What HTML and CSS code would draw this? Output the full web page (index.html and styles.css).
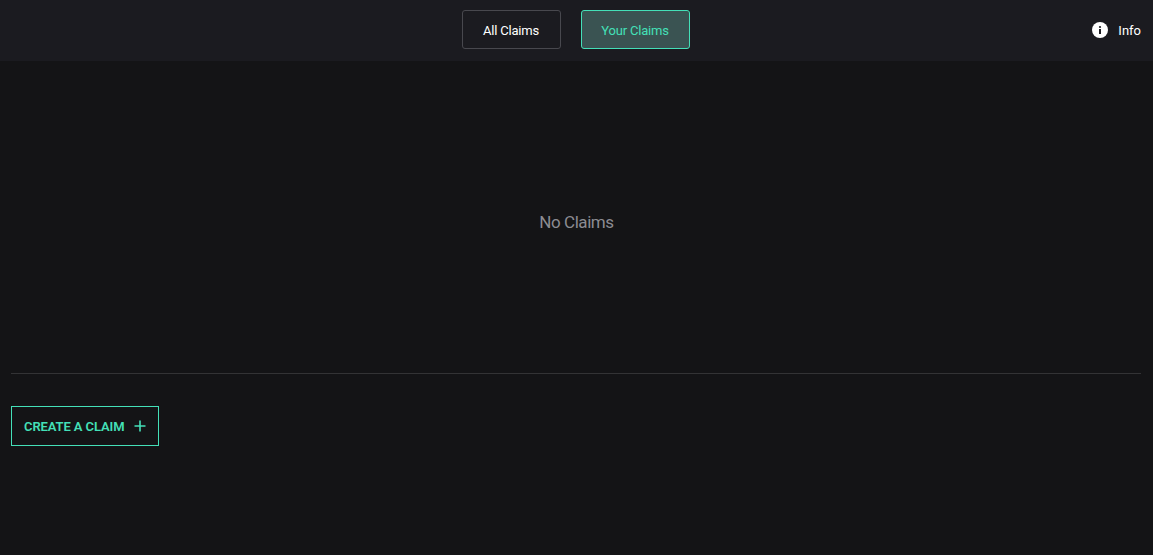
FILE: index.html
```html
<!DOCTYPE html>
<html lang="en">
<head>
<meta charset="utf-8">
<title>Claims</title>
<link rel="stylesheet" href="styles.css">
</head>
<body>
<header class="topbar">
  <nav class="tabs">
    <button class="tab">All Claims</button>
    <button class="tab tab-active">Your Claims</button>
  </nav>
  <div class="info">
    <svg class="info-icon" viewBox="0 0 16 16" width="16" height="16" aria-hidden="true">
      <circle cx="8" cy="8" r="8" fill="#fff"/>
      <rect x="7" y="7" width="2" height="5" fill="#1b1b20"/>
      <circle cx="8" cy="5" r="1.1" fill="#1b1b20"/>
    </svg>
    <span class="info-label">Info</span>
  </div>
</header>
<main class="content">
  <section class="empty">No Claims</section>
  <hr class="rule">
  <button class="create">CREATE A CLAIM
    <svg viewBox="0 0 12 12" width="12" height="12" aria-hidden="true"><path d="M6 0.5V11.5M0.5 6H11.5" stroke="#44e0b8" stroke-width="1.6" fill="none"/></svg>
  </button>
</main>
</body>
</html>
```
FILE: styles.css
```css
* { box-sizing: border-box; }
html, body { margin: 0; height: 100%; }
body {
  background: #141416;
  color: #fff;
  font-family: Roboto, "Liberation Sans", sans-serif;
  overflow: hidden;
}
.topbar {
  height: 61px;
  background: #1b1b20;
  display: flex;
  align-items: center;
  justify-content: center;
  position: relative;
}
.tabs { display: flex; gap: 20px; margin-bottom: 2px; margin-right: 2px; }
.tab {
  height: 39px;
  border: 1px solid #48484e;
  border-radius: 3px;
  background: transparent;
  color: #fff;
  font: 400 13px Roboto, sans-serif;
  letter-spacing: -0.2px;
  padding: 1px 0 0;
  width: 99px;
}
.tab-active {
  width: 109px;
  background: #3a5352;
  border-color: #44e0b8;
  color: #44e0b8;
}
.info {
  position: absolute;
  right: 12px;
  top: 21px;
  display: flex;
  align-items: center;
  gap: 10px;
  font-size: 13px;
}
.info-label { padding-top: 2px; }
.content { padding: 0 12px 0 11px; }
.empty {
  height: 312px;
  display: flex;
  align-items: center;
  justify-content: center;
  padding-top: 9px;
  margin-right: -1px;
  font-size: 17px;
  letter-spacing: -0.45px;
  color: #8c8c92;
}
.rule { margin: 0; border: 0; height: 1px; background: #333335; }
.create {
  margin-top: 32px;
  width: 148px;
  height: 40px;
  background: transparent;
  border: 1px solid #44e0b8;
  color: #44e0b8;
  font: 600 13px Roboto, sans-serif;
  letter-spacing: -0.1px;
  display: flex;
  align-items: center;
  justify-content: space-between;
  padding: 0 12px;
}
```
